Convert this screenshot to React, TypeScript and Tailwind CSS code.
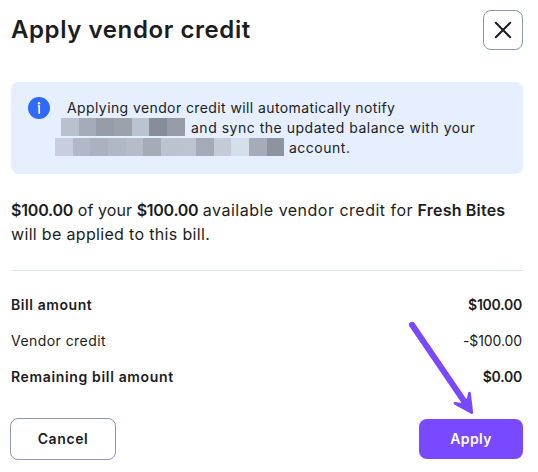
import clsx from 'clsx'

const rows = [
    { label: 'Bill amount', value: '$100.00', bold: true, tracking: 'tracking-[0.58px]' },
    { label: 'Vendor credit', value: '-$100.00', bold: false, tracking: 'tracking-[0.44px]' },
    { label: 'Remaining bill amount', value: '$0.00', bold: true, tracking: 'tracking-[0.65px]' },
]

// [width, color] of each block
const nameBlocks: [number, string][] = [
    [18, '#b9c0ce'], [17, '#a4abb8'], [18, '#969da8'], [18, '#9ba2ac'], [17, '#bac3d0'], [18, '#868d98'], [18, '#959ca8'],
]
const accountBlocks: [number, string][] = [
    [18, '#c8cedd'], [17, '#b1b8c7'], [18, '#abb1bf'], [18, '#b1b8c5'], [17, '#b6bcca'], [18, '#a5acb7'], [18, '#bcc3d0'],
    [17, '#bdc4d1'], [18, '#a5abb6'], [17, '#c3cbd9'], [18, '#d2dee9'], [18, '#a5acb9'], [17, '#8e949f'],
]

function Redacted({ blocks }: { blocks: [number, string][] }) {
    return (
        <div className="flex h-[18px] shrink-0">
            {blocks.map(([width, color], i) => <span key={i} style={{ width, backgroundColor: color }} />)}
        </div>
    )
}

export default function App() {
    return (
        <div className="relative w-[538px] h-[472px] overflow-hidden bg-white pl-[11px] pr-[15px] text-[#1b1d20] font-['Inter','Liberation_Sans',sans-serif] whitespace-nowrap">
            <header className="flex justify-between pt-[10px]">
                <h1 className="text-[24px] leading-10 font-semibold tracking-[0.59px]">Apply vendor credit</h1>
                <button aria-label="Close" className="flex items-center justify-center w-10 h-10 border border-[#8c97b3] rounded-lg">
                    <svg width="18" height="18" viewBox="0 0 18 18" fill="none" stroke="#1b1d20" strokeWidth="2" strokeLinecap="round">
                        <path d="M1.8 1.8L16.2 16.2M16.2 1.8L1.8 16.2" />
                    </svg>
                </button>
            </header>

            <section className="flex mt-8 h-[92px] rounded-lg bg-[#e5efff] pt-4 pl-[17px]">
                <svg className="shrink-0 -mt-px" width="22" height="22" viewBox="0 0 22 22">
                    <circle cx="11" cy="11" r="11" fill="#3169fb" />
                    <circle cx="11" cy="6.2" r="1.2" fill="#fff" />
                    <path d="M9.8 9H11.2V16.8" fill="none" stroke="#fff" strokeWidth="1.7" />
                </svg>
                <div className="flex flex-col ml-[5px] text-[14px] leading-5">
                    <p className="pl-3 tracking-[0.4px]">Applying vendor credit will automatically notify</p>
                    <div className="flex pl-[6px] h-5">
                        <Redacted blocks={nameBlocks} />
                        <span className="ml-[6px] tracking-[0.51px]">and sync the updated balance with your</span>
                    </div>
                    <div className="flex h-5">
                        <Redacted blocks={accountBlocks} />
                        <span className="ml-[5px] tracking-[0.5px]">account.</span>
                    </div>
                </div>
            </section>

            <p className="mt-[24px] pb-[24px] border-b border-[#e1e5ee] text-[16px] leading-6">
                <b className="font-semibold tracking-[-0.2px]">$100.00</b> <span className="tracking-[0.1px]">of your</span>{' '}
                <b className="font-semibold tracking-[-0.28px]">$100.00</b>{' '}
                <span className="tracking-[0.49px]">available vendor credit for</span>{' '}
                <b className="font-semibold tracking-[0.2px]">Fresh Bites</b>
                <br />
                <span className="tracking-[0.33px]">will be applied to this bill.</span>
            </p>

            <dl className="mt-[16px] text-[14px] leading-9">
                {rows.map(r => (
                    <div key={r.label} className={clsx('flex justify-between pr-px', r.bold && 'font-semibold')}>
                        <dt className={r.tracking}>{r.label}</dt>
                        <dd className={r.bold ? 'tracking-[-0.25px]' : 'tracking-[-0.1px]'}>{r.value}</dd>
                    </div>
                ))}
            </dl>

            <footer className="flex items-center justify-between mt-[23px] -ml-px text-[14px] font-semibold">
                <button className="w-[106px] h-[42px] pb-0.5 border border-[#8c97b3] rounded-lg tracking-[0.6px]">Cancel</button>
                <button className="w-[104px] h-10 pb-0.5 rounded-lg bg-[#7849ff] text-white tracking-[0.4px]">Apply</button>
            </footer>

            {/* Pointer to the Apply button */}
            <svg className="absolute left-[400px] top-[310px]" width="90" height="110" viewBox="0 0 90 110" fill="#7849ff">
                <path d="M12 14.8L66 94" stroke="#7849ff" strokeWidth="6" strokeLinecap="round" />
                <path d="M61 92.5L70 86L71.5 101Z" />
                <path d="M71.8 102.6L55 93.3L65 94.8L67.5 93L69.4 83.2Z" stroke="#7849ff" strokeWidth="2.8" strokeLinejoin="round" />
            </svg>
        </div>
    )
}
